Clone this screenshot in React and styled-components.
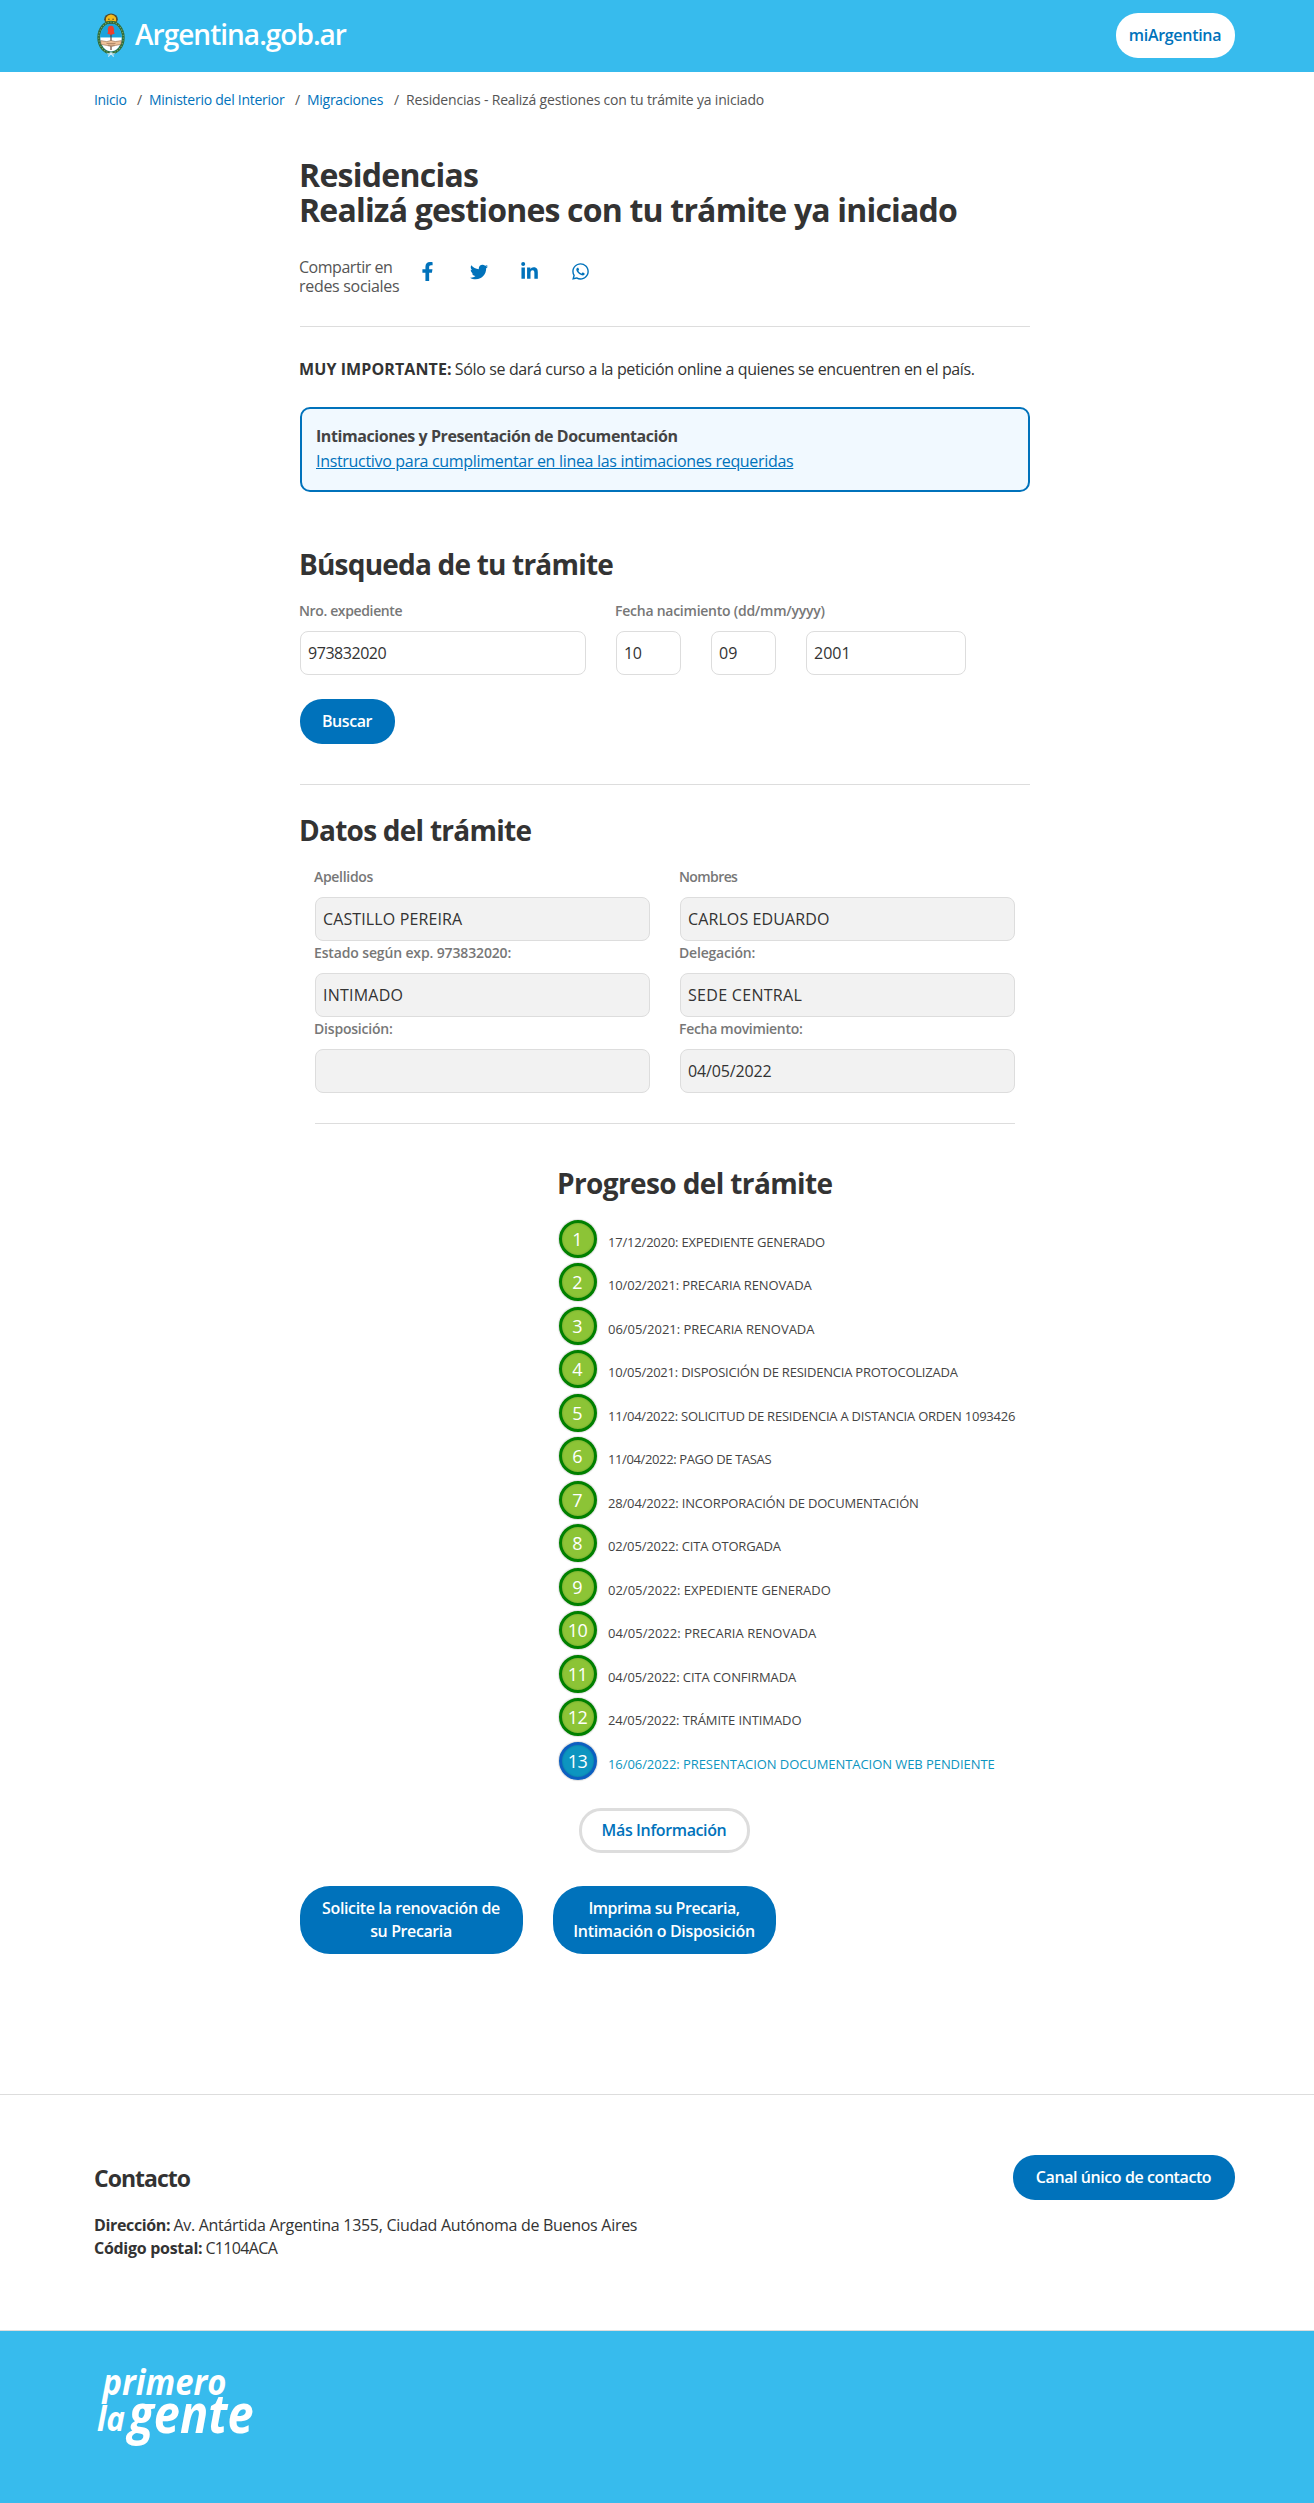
import React from 'react';
import styled, { createGlobalStyle } from 'styled-components';
import { FaFacebookF, FaTwitter, FaLinkedinIn, FaWhatsapp } from 'react-icons/fa';

const BLUE = '#0072bb';
const SKY = '#37bbed';
const LINE = '#dddddd';

const GlobalStyle = createGlobalStyle`
  *, *::before, *::after { box-sizing: border-box; }
  body {
    margin: 0;
    background: #fff;
    color: #333;
    font: 400 16px/23px "Open Sans", "Noto Sans", sans-serif;
  }
  h1, h2, h3, p, ol { margin: 0; padding: 0; }
`;

/* Text run with its own tracking */
const T = styled.span`
  margin-left: -1px;
  letter-spacing: ${({ $ls = -0.35 }) => $ls}px;
  white-space: nowrap;
`;

const Container = styled.div`
  width: 1140px;
  margin: 0 0 0 95px;
`;

const Header = styled.header`
  height: 72px;
  padding-top: 13px;
  background: ${SKY};
`;

const HeaderRow = styled(Container)`
  display: flex;
  justify-content: space-between;
  align-items: flex-start;
`;

const Brand = styled.div`
  display: flex;
  align-items: flex-start;
  padding-left: 1px;
  color: #fff;
  font-size: 28px;
  font-weight: 600;
  line-height: 43px;

  svg { display: block; margin-right: 10px; }
`;

const Button = styled.button`
  display: inline-flex;
  flex-direction: column;
  align-items: center;
  justify-content: center;
  width: ${({ $w }) => $w}px;
  height: ${({ $h = 45 }) => $h}px;
  padding: 0;
  border: ${({ $outline }) => ($outline ? `3px solid ${LINE}` : '0')};
  border-radius: ${({ $r = 22 }) => $r}px;
  background: ${({ $light }) => ($light ? '#fff' : BLUE)};
  color: ${({ $light }) => ($light ? BLUE : '#fff')};
  font: 600 16px/23px "Open Sans", "Noto Sans", sans-serif;
`;

const Breadcrumb = styled.nav`
  display: flex;
  padding: 18px 0 0;
  font-size: 14px;
  line-height: 20px;
  color: #555;
`;

const Crumb = styled.span`
  color: ${BLUE};
  width: ${({ $w }) => $w}px;
`;

const Slash = styled.span`
  width: 13px;
`;

const Main = styled.main`
  width: 730px;
  margin: 47px 0 0 300px;
`;

const Title = styled.h1`
  font-size: 32px;
  line-height: 35px;
  font-weight: 700;
`;

const Subtitle = styled.h2`
  margin-top: ${({ $mt }) => $mt}px;
  font-size: 28px;
  line-height: 31px;
  font-weight: 700;
`;

const Share = styled.div`
  display: flex;
  height: 39px;
  margin-top: 30px;
`;

const ShareLabel = styled.div`
  display: flex;
  flex-direction: column;
  width: 102px;
  padding-top: 1px;
  color: #555;
  line-height: 19px;
`;

const ShareIcon = styled.a`
  display: flex;
  align-items: center;
  justify-content: center;
  width: 51px;
  height: 29px;
  color: ${BLUE};
`;

const Rule = styled.hr`
  height: 1px;
  margin: ${({ $mt }) => $mt}px 0 0;
  border: 0;
  background: ${LINE};
`;

const Notice = styled.p`
  margin-top: 31px;
`;

const Callout = styled.section`
  display: flex;
  flex-direction: column;
  height: 85px;
  margin-top: 26px;
  padding: 15px 15px 0;
  border: 2px solid ${BLUE};
  border-radius: 10px;
  background: #f1f9ff;
  color: #444;
  line-height: 25px;
`;

const CalloutLink = styled.a`
  color: ${BLUE};
  text-decoration: underline;
`;

const FormRow = styled.div`
  display: flex;
  gap: 30px;
  margin-top: 21px;
`;

const Field = styled.div`
  display: flex;
  flex-direction: column;
`;

const Label = styled.label`
  height: 20px;
  margin-bottom: 10px;
  color: #777;
  font-size: 14px;
  font-weight: 600;
  line-height: 20px;
`;

const Inputs = styled.div`
  display: flex;
  gap: 30px;
`;

const Box = styled.div`
  width: ${({ $w }) => $w}px;
  height: 44px;
  padding: 0 8px;
  border: 1px solid ${LINE};
  border-radius: 8px;
  background: ${({ $disabled }) => ($disabled ? '#f2f2f2' : '#fff')};
  line-height: 42px;
`;

const SearchAction = styled.div`
  display: flex;
  margin-top: 24px;
`;

const DataPanel = styled.div`
  padding: 0 15px;
`;

const DataGrid = styled.div`
  display: grid;
  grid-template-columns: 335px 335px;
  column-gap: 30px;
  row-gap: 2px;
  margin-top: 21px;
`;

const Progress = styled.section`
  margin: 0 0 0 258px;
`;

const Steps = styled.ol`
  margin-top: 20.8px;
  list-style: none;
`;

const Step = styled.li`
  display: flex;
  align-items: flex-start;
  height: 43.5px;
  color: ${({ $current }) => ($current ? '#0d95c0' : '#444')};
  font-size: 13px;
  line-height: 44px;
`;

const StepNumber = styled.span`
  display: flex;
  align-items: center;
  justify-content: center;
  width: 38px;
  height: 38px;
  margin: 0 12px 0 1px;
  border: 3px solid ${({ $current }) => ($current ? '#0d5fc0' : '#008000')};
  border-radius: 50%;
  background: ${({ $current }) => ($current ? '#0d95c0' : '#8cc436')};
  box-shadow: 0 0 1px 1px rgba(0, 0, 0, 0.12), inset 0 0 2px rgba(0, 0, 0, 0.25);
  color: #fff;
  font-size: 18px;
  line-height: 18px;
`;

const MoreInfo = styled.div`
  display: flex;
  margin: 22.7px 0 0 21px;
`;

const Actions = styled.div`
  display: flex;
  gap: 30px;
  margin-top: 33px;
`;

const Contact = styled.section`
  height: 236px;
  margin-top: 140px;
  padding-top: 60px;
  border-top: 1px solid ${LINE};
`;

const ContactRow = styled(Container)`
  display: flex;
  justify-content: space-between;
  align-items: flex-start;
`;

const ContactTitle = styled.h3`
  margin: 9px 0 22px;
  font-size: 23px;
  line-height: 28px;
  font-weight: 700;
`;

const Footer = styled.footer`
  height: 173px;
  padding: 13px 0 0 80px;
  border-top: 1px solid ${LINE};
  background: ${SKY};

  svg { display: block; overflow: visible; }

  text {
    fill: #fff;
    font-family: "Open Sans", "Noto Sans", sans-serif;
    font-style: italic;
    font-weight: 700;
  }
`;

function Emblem() {
  return (
    <svg width="30" height="45" viewBox="0 0 30 45">
      <ellipse cx="15" cy="6.2" rx="6.8" ry="5.6" fill="#564b2a" />
      <path d="M9.8 8.6 10 4.8 12 2.4 15 1.6 18 2.4 20 4.8 20.2 8.6Z" fill="#f4bb1b" />
      <circle cx="12.9" cy="6.2" r="0.8" fill="#564b2a" />
      <circle cx="17.1" cy="6.2" r="0.8" fill="#564b2a" />
      <ellipse cx="15" cy="24.5" rx="12.3" ry="15.4" fill="none" stroke="#2f6b3c" strokeWidth="2.8" />
      <ellipse cx="15" cy="24.5" rx="12.3" ry="15.4" fill="none" stroke="#6fa765" strokeWidth="1.2" strokeDasharray="1.2 1.6" />
      <path d="M4.4 24.5a10.6 13.8 0 0 1 21.2 0Z" fill="#19a3dd" />
      <path d="M4.4 24.5a10.6 13.8 0 0 0 21.2 0Z" fill="#fff" />
      <path d="M15 18v19" stroke="#5b3a2a" strokeWidth="1.1" />
      <path d="M12.6 13.6q2.4-1.6 4.6 0l1 3-.4 1.8 1 2.2-2.4.8-2 .4-3-1 .8-2.6-.6-2Z" fill="#ee3f2c" />
      <path d="m4.6 27.6 6.2 1 4.2-1.2 4.2 1.2 6.2-1 -.4 3.8-5.4 1-4 1.2-5-1.2-5.6-1Z" fill="#efc29a" stroke="#7d5a40" strokeWidth="0.5" />
      <path d="M10.5 30.4h9M12 32.2h6.6" stroke="#7d5a40" strokeWidth="0.6" />
      <path d="m12.4 43.6 2.6-4 2.6 4M11.4 40.4l3.6 1.2 3.6-1.2" fill="none" stroke="#cfeaf8" strokeWidth="1.1" />
    </svg>
  );
}

const shareIcons = [
  [FaFacebookF, 19],
  [FaTwitter, 18],
  [FaLinkedinIn, 19],
  [FaWhatsapp, 19],
];

const data = [
  ['Apellidos', -0.31, 'CASTILLO PEREIRA', 0.12],
  ['Nombres', -0.6, 'CARLOS EDUARDO', 0.11],
  ['Estado según exp. 973832020:', -0.14, 'INTIMADO', 0.23],
  ['Delegación:', -0.2, 'SEDE CENTRAL', 0.3],
  ['Disposición:', -0.2, '', 0],
  ['Fecha movimiento:', -0.3, '04/05/2022', -0.14],
];

const steps = [
  ['17/12/2020: EXPEDIENTE GENERADO', -0.19],
  ['10/02/2021: PRECARIA RENOVADA', -0.13],
  ['06/05/2021: PRECARIA RENOVADA', -0.03],
  ['10/05/2021: DISPOSICIÓN DE RESIDENCIA PROTOCOLIZADA', -0.22],
  ['11/04/2022: SOLICITUD DE RESIDENCIA A DISTANCIA ORDEN 1093426', -0.226],
  ['11/04/2022: PAGO DE TASAS', -0.38],
  ['28/04/2022: INCORPORACIÓN DE DOCUMENTACIÓN', -0.17],
  ['02/05/2022: CITA OTORGADA', -0.17],
  ['02/05/2022: EXPEDIENTE GENERADO', 0],
  ['04/05/2022: PRECARIA RENOVADA', 0.03],
  ['04/05/2022: CITA CONFIRMADA', -0.08],
  ['24/05/2022: TRÁMITE INTIMADO', -0.09],
  ['16/06/2022: PRESENTACION DOCUMENTACION WEB PENDIENTE', -0.067],
];

export default function App() {
  return (
    <>
      <GlobalStyle />
      <Header>
        <HeaderRow>
          <Brand>
            <Emblem />
            <T $ls={-0.98}>Argentina.gob.ar</T>
          </Brand>
          <Button $w={119} $light>
            <T $ls={-0.31}>miArgentina</T>
          </Button>
        </HeaderRow>
      </Header>

      <Container>
        <Breadcrumb>
          <Crumb $w={42}><T $ls={-0.35}>Inicio</T></Crumb>
          <Slash>/</Slash>
          <Crumb $w={145}><T $ls={-0.26}>Ministerio del Interior</T></Crumb>
          <Slash>/</Slash>
          <Crumb $w={86}><T $ls={-0.27}>Migraciones</T></Crumb>
          <Slash>/</Slash>
          <T $ls={-0.18}>Residencias - Realizá gestiones con tu trámite ya iniciado</T>
        </Breadcrumb>
      </Container>

      <Main>
        <Title>
          <T $ls={-0.744}>Residencias</T>
          <br />
          <T $ls={-0.808}>Realizá gestiones con tu trámite ya iniciado</T>
        </Title>

        <Share>
          <ShareLabel>
            <T $ls={-0.47}>Compartir en</T>
            <T $ls={-0.3}>redes sociales</T>
          </ShareLabel>
          {shareIcons.map(([Icon, size], i) => (
            <ShareIcon key={i}>
              <Icon size={size} />
            </ShareIcon>
          ))}
        </Share>
        <Rule $mt={30} />

        <Notice>
          <b><T $ls={0.1}>MUY IMPORTANTE:</T></b>{' '}
          <T $ls={-0.363}>Sólo se dará curso a la petición online a quienes se encuentren en el país.</T>
        </Notice>

        <Callout>
          <b><T $ls={-0.428}>Intimaciones y Presentación de Documentación</T></b>
          <div>
            <CalloutLink>
              <T $ls={-0.317}>Instructivo para cumplimentar en linea las intimaciones requeridas</T>
            </CalloutLink>
          </div>
        </Callout>

        <Subtitle $mt={57}><T $ls={-0.8}>Búsqueda de tu trámite</T></Subtitle>
        <FormRow>
          <Field>
            <Label><T $ls={-0.37}>Nro. expediente</T></Label>
            <Box $w={286}><T $ls={-0.46}>973832020</T></Box>
          </Field>
          <Field>
            <Label><T $ls={-0.247}>Fecha nacimiento (dd/mm/yyyy)</T></Label>
            <Inputs>
              <Box $w={65}><T $ls={-0.3}>10</T></Box>
              <Box $w={65}><T $ls={0}>09</T></Box>
              <Box $w={160}><T $ls={0}>2001</T></Box>
            </Inputs>
          </Field>
        </FormRow>
        <SearchAction>
          <Button $w={95}><T $ls={-0.445}>Buscar</T></Button>
        </SearchAction>
        <Rule $mt={40} />

        <Subtitle $mt={30}><T $ls={-0.75}>Datos del trámite</T></Subtitle>
        <DataPanel>
          <DataGrid>
            {data.map(([label, labelLs, value, valueLs]) => (
              <Field key={label}>
                <Label><T $ls={labelLs}>{label}</T></Label>
                <Box $w={335} $disabled><T $ls={valueLs}>{value}</T></Box>
              </Field>
            ))}
          </DataGrid>
          <Rule $mt={30} />
        </DataPanel>

        <Progress>
          <Subtitle $mt={44}><T $ls={-0.62}>Progreso del trámite</T></Subtitle>
          <Steps>
            {steps.map(([text, ls], i) => {
              const current = i === steps.length - 1;
              return (
                <Step key={text} $current={current}>
                  <StepNumber $current={current}>
                    <T $ls={i > 8 ? -0.6 : 0}>{i + 1}</T>
                  </StepNumber>
                  <T $ls={ls}>{text}</T>
                </Step>
              );
            })}
          </Steps>
          <MoreInfo>
            <Button $w={171} $light $outline><T $ls={-0.37}>Más Información</T></Button>
          </MoreInfo>
        </Progress>

        <Actions>
          <Button $w={223} $h={68} $r={30}>
            <T $ls={-0.368}>Solicite la renovación de</T>
            <T $ls={-0.4}>su Precaria</T>
          </Button>
          <Button $w={223} $h={68} $r={30}>
            <T $ls={-0.464}>Imprima su Precaria,</T>
            <T $ls={-0.314}>Intimación o Disposición</T>
          </Button>
        </Actions>
      </Main>

      <Contact>
        <ContactRow>
          <div>
            <ContactTitle><T $ls={-1}>Contacto</T></ContactTitle>
            <p>
              <b><T $ls={-0.356}>Dirección:</T></b>{' '}
              <T $ls={-0.289}>Av. Antártida Argentina 1355, Ciudad Autónoma de Buenos Aires</T>
            </p>
            <p>
              <b><T $ls={-0.284}>Código postal:</T></b>{' '}
              <T $ls={-0.65}>C1104ACA</T>
            </p>
          </div>
          <Button $w={222}><T $ls={-0.42}>Canal único de contacto</T></Button>
        </ContactRow>
      </Contact>

      <Footer>
        <svg width="220" height="130" viewBox="0 0 220 130">
          <text x="22.5" y="51" fontSize="36" textLength="124" lengthAdjust="spacingAndGlyphs">primero</text>
          <text x="17" y="86.7" fontSize="34" textLength="28" lengthAdjust="spacingAndGlyphs">la</text>
          <text x="48.5" y="89" fontSize="53" textLength="125" lengthAdjust="spacingAndGlyphs">gente</text>
        </svg>
      </Footer>
    </>
  );
}
